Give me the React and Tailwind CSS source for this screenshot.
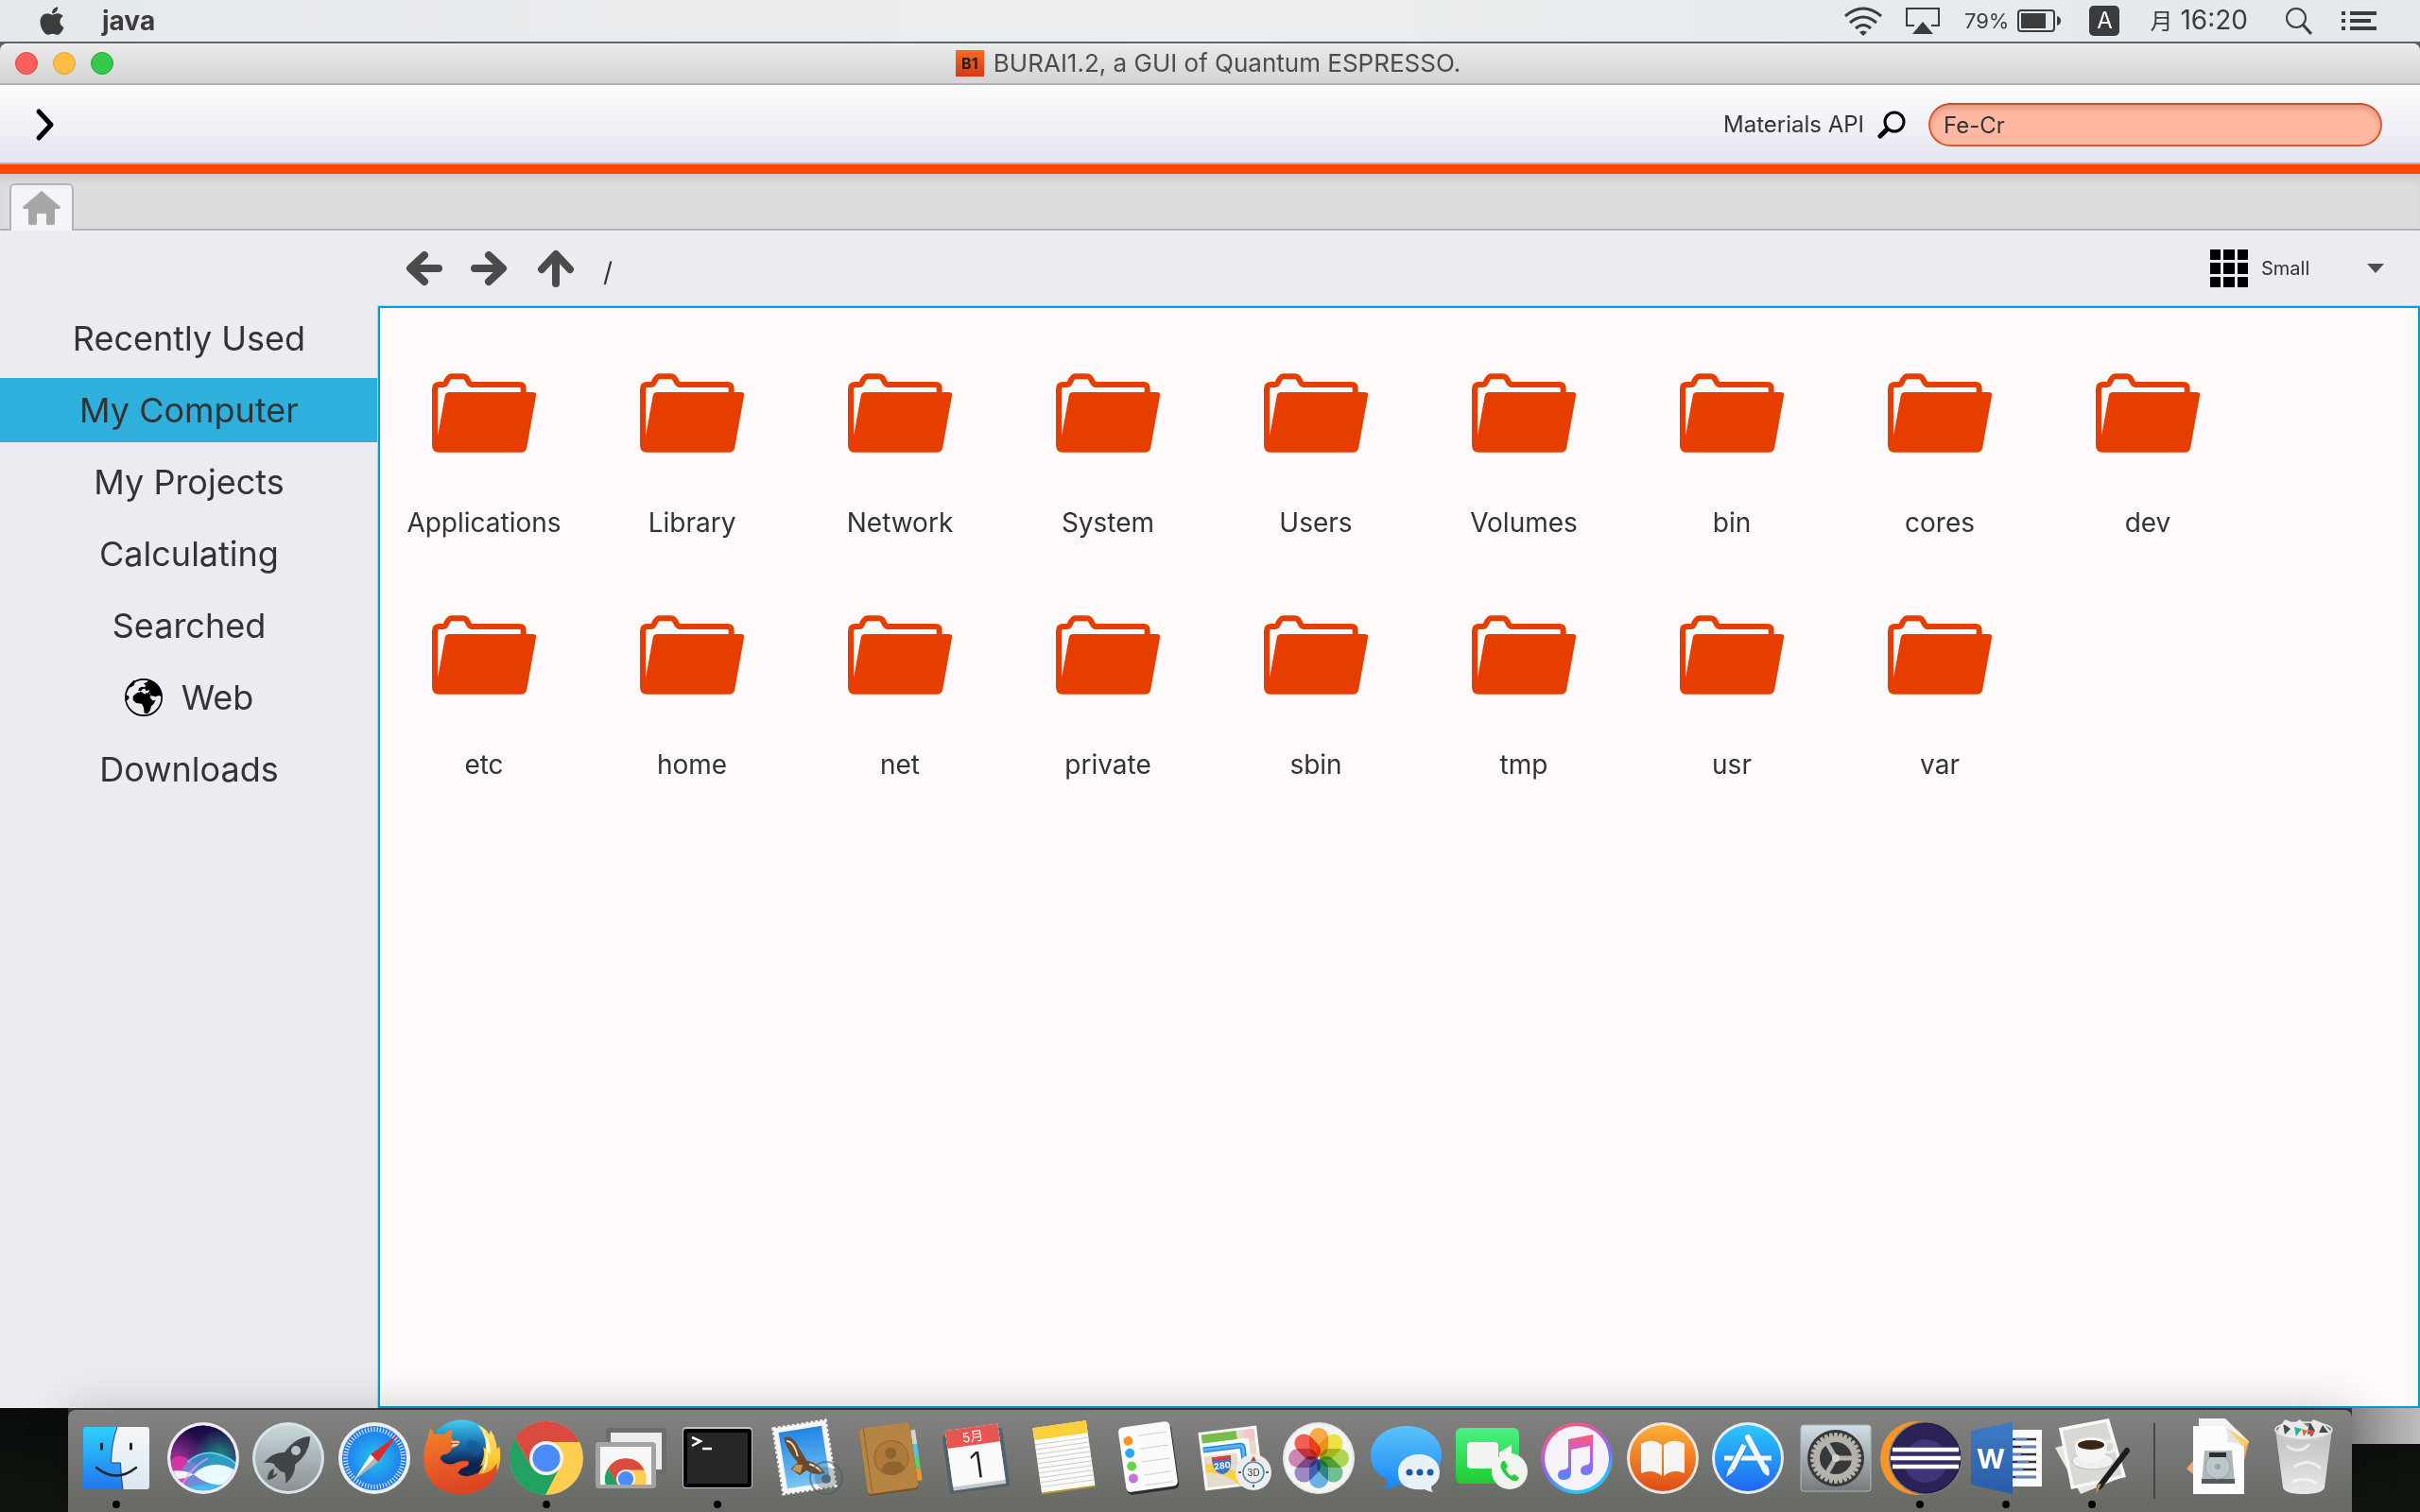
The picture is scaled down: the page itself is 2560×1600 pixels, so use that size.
import { FaApple } from "react-icons/fa";

const FOLDERS = [
  "Applications", "Library", "Network", "System", "Users", "Volumes", "bin", "cores", "dev",
  "etc", "home", "net", "private", "sbin", "tmp", "usr", "var",
];

const PLACES = ["Recently Used", "My Computer", "My Projects", "Calculating", "Searched", "Web", "Downloads"];

function FolderIcon() {
  return (
    <svg viewBox="108 45 330 252" className="h-[84px] w-[110px]" aria-hidden="true">
      <path
        d="M117 270V95Q117 81 131 81H143Q149 81 153 73Q161 55 169 55H207Q216 55 222 68Q228 81 235 81H386Q398 81 398 93V112"
        fill="none" stroke="#e63e00" strokeWidth="18"
      />
      <path
        d="M149 117Q151 105 162 105H430Q440 105 438 117L409 280Q406 296 392 296H130Q108 296 108 272V240H127Z"
        fill="#e63e00"
      />
    </svg>
  );
}

function GlobeIcon() {
  return (
    <svg viewBox="36 54 120 120" className="size-10" aria-hidden="true">
      <circle cx="96" cy="114" r="57.5" fill="none" stroke="#000" strokeWidth="5" />
      <path d="M40 100L50 84L66 76L68 64L84 60L64 60L44 82Z" />
      <path d="M39 108L48 108L50 116L44 124L39 120Z" />
      <path d="M96 70L106 66L112 58Q150 70 154 112L144 108L134 112L118 108L116 100L110 104L104 102L98 94L92 90L86 94L78 92L82 84L90 80L100 82L102 76Z" />
      <path d="M74 100L88 96L100 104L114 106L124 118L134 122L128 134L120 142L116 156L108 166L98 164L96 146L90 134L72 132L62 122L62 110Z" />
      <path d="M114 112L136 116L132 124L124 124Z" fill="#ecebf2" />
      <path d="M90 88L100 86L104 94L114 90L112 100L102 100Z" fill="#ecebf2" />
      <path d="M98 102L110 103L113 95L118 108L112 110Z" />
    </svg>
  );
}

function ArrowIcon({ d }) {
  return (
    <svg viewBox="0 0 40 40" className="size-10" aria-hidden="true">
      <path d={d} fill="none" stroke="#4b4b4b" strokeWidth="8" strokeLinecap="round" strokeLinejoin="round" />
    </svg>
  );
}

function MenuBar() {
  return (
    <header className="flex h-11 items-center bg-linear-to-r from-[#e6e9ec] via-[#eceeef] to-[#e3e8ec] pr-[46px] pl-[38px] text-[#3a3c3e]">
      <FaApple className="size-[34px]" />
      <span className="ml-9 text-[28px] leading-8 font-bold">java</span>
      <div className="ml-auto flex items-center">
        <svg viewBox="0 0 42 32" className="h-8 w-[42px]" fill="none" stroke="currentColor" strokeWidth="3">
          <path d="M2 11Q21 -5 40 11M7 18Q21 6 35 18M13 24Q21 17 29 24" />
          <path d="M17 28Q21 25 25 28L21 32Z" fill="currentColor" stroke="none" />
        </svg>
        <svg viewBox="0 0 36 28" className="ml-6 h-7 w-9" fill="none" stroke="currentColor" strokeWidth="2">
          <path d="M9 19H1V1H35V19H27" />
          <path d="M18 15L29 28H7Z" fill="currentColor" stroke="none" />
        </svg>
        <span className="ml-[26px] text-[22px] leading-8">79%</span>
        <svg viewBox="0 0 46 24" className="ml-[9px] h-6 w-[46px]">
          <rect x="1" y="1" width="38" height="22" rx="3" fill="none" stroke="currentColor" strokeWidth="2" />
          <rect x="4" y="4" width="26" height="16" fill="currentColor" />
          <path d="M42 7Q46 8 46 12T42 17Z" fill="currentColor" />
        </svg>
        <span className="ml-[30px] flex h-8 w-8 items-center justify-center rounded-[5px] bg-[#3a3c3e] text-[24px] leading-8 text-white">A</span>
        <span className="ml-8 text-[28px] leading-8">
          <span className="mr-2 text-[24px]">月</span>16:20
        </span>
        <svg viewBox="0 0 28 30" className="ml-10 h-[30px] w-7" fill="none" stroke="currentColor">
          <circle cx="11" cy="12" r="10" strokeWidth="2" />
          <path d="M18 19L27 29" strokeWidth="3" />
        </svg>
        <svg viewBox="0 0 37 20" className="ml-[31px] h-5 w-[37px]" stroke="currentColor" strokeWidth="4">
          <path d="M0 2H4M9 2H37M0 10H4M9 10H31M0 18H4M9 18H37" />
        </svg>
      </div>
    </header>
  );
}

function TitleBar() {
  return (
    <div className="flex h-11 items-center rounded-t-lg border-b-2 border-b-[#b0b0b0] bg-linear-to-b from-[#ebebeb] to-[#d3d3d3] pr-5 pl-4 shadow-[inset_0_1px_0_#f8f8f8]">
      <div className="flex flex-1 gap-4">
        <button aria-label="Close" className="size-6 rounded-full border border-[#e2453f] bg-[#fe5f5b]" />
        <button aria-label="Minimize" className="size-6 rounded-full border border-[#dfa032] bg-[#fdbe41]" />
        <button aria-label="Zoom" className="size-6 rounded-full border border-[#1fa836] bg-[#35c84a]" />
      </div>
      <span className="flex h-7 w-[30px] items-center justify-center bg-linear-to-b from-[#fb6a22] to-[#d43a14] text-[16px] leading-7 font-bold text-[#2b1a14]">B1</span>
      <h1 className="ml-[10px] text-[26px] leading-8 text-[#4c4c4c]">BURAI1.2, a GUI of Quantum ESPRESSO.</h1>
      <div className="flex-1" />
    </div>
  );
}

function ToolBar() {
  return (
    <div className="flex h-[94px] items-center border-b-[10px] border-[#ff4600] bg-linear-to-b from-[#fdfdfe] to-[#e4e4f0] pr-10 pl-9 shadow-[inset_0_-2px_0_#b2b2bb]">
      <button aria-label="Open menu">
        <svg viewBox="0 0 24 36" className="h-9 w-6">
          <path d="M5 4L18 18L5 32" fill="none" stroke="#000" strokeWidth="5" strokeLinecap="round" strokeLinejoin="round" />
        </svg>
      </button>
      <label htmlFor="materials" className="ml-auto text-[24px] leading-8 text-[#333]">Materials API</label>
      <svg viewBox="0 0 30 30" className="mr-6 ml-[14px] size-[30px]" fill="none" stroke="#000">
        <circle cx="18" cy="12" r="10" strokeWidth="3" />
        <path d="M10 20L3 27" strokeWidth="5" strokeLinecap="round" />
      </svg>
      <input
        id="materials"
        defaultValue="Fe-Cr"
        className="h-[46px] w-[480px] rounded-full border-2 border-[#d95a30] border-t-[#c4502c] bg-[#ffb9a2] px-[14px] text-[24px] text-[#333] shadow-[inset_0_4px_6px_rgba(150,60,30,0.25)] outline-none"
      />
    </div>
  );
}

function TabBar() {
  return (
    <div className="flex h-[60px] items-end bg-[#dcdcde] px-[10px] shadow-[inset_0_-2px_0_#b3b3ba,inset_0_8px_8px_-4px_#c6c6c9]">
      <button aria-label="Home" className="flex h-[50px] w-[68px] items-center justify-center rounded-t-[6px] border-2 border-b-0 border-[#b3b3ba] bg-[#f3f3f8]">
        <svg viewBox="0 0 40 36" className="h-9 w-10" fill="#a6a6a6">
          <path d="M20 0L40 17Q40 19 38 19H34V34Q34 36 32 36H27Q25 36 25 34V25Q25 24 24 24H16Q15 24 15 25V34Q15 36 13 36H8Q6 36 6 34V19H2Q0 19 0 17Z" />
        </svg>
      </button>
    </div>
  );
}

function Sidebar() {
  return (
    <nav className="flex w-[400px] shrink-0 flex-col gap-2 pt-20">
      {PLACES.map((name) => (
        <button
          key={name}
          className={
            name === "My Computer"
              ? "flex h-[68px] items-center justify-center gap-5 bg-[#2eafdc] text-[36px] leading-[44px]"
              : "flex h-[68px] items-center justify-center gap-5 text-[36px] leading-[44px]"
          }
        >
          {name === "Web" && <GlobeIcon />}
          {name}
        </button>
      ))}
    </nav>
  );
}

function Explorer() {
  return (
    <main className="flex min-w-0 flex-1 flex-col">
      <div className="flex h-20 items-center pr-[38px] pl-7">
        <div className="flex items-center gap-[30px]">
          <button aria-label="Back"><ArrowIcon d="M21 6L6 20L21 34M7 20H36" /></button>
          <button aria-label="Forward"><ArrowIcon d="M19 6L34 20L19 34M33 20H4" /></button>
          <button aria-label="Up"><ArrowIcon d="M5 21L20 5L35 21M20 6V36" /></button>
          <span className="pt-2 text-[28px] leading-9">/</span>
        </div>
        <svg viewBox="0 0 40 40" className="mr-[10px] ml-auto size-10">
          <path d="M0 0H11V11H0ZM14 0H26V11H14ZM29 0H40V11H29ZM0 14H11V26H0ZM14 14H26V26H14ZM29 14H40V26H29ZM0 29H11V40H0ZM14 29H26V40H14ZM29 29H40V40H29Z" />
        </svg>
        <div className="relative flex w-[134px] items-center">
          <select aria-label="Icon size" className="w-full appearance-none bg-transparent pl-1 text-[20px] leading-8 outline-none">
            <option>Small</option>
          </select>
          <svg viewBox="0 0 18 10" className="pointer-events-none absolute right-0 h-[10px] w-[18px]">
            <path d="M0 0H18L9 10Z" fill="#4f4f52" />
          </svg>
        </div>
      </div>
      <ul className="flex flex-1 flex-wrap content-start border-2 border-[#009dd9] bg-[#fffafa] pt-4 shadow-[0_0_0_1px_#a9d6e8]">
        {FOLDERS.map((name) => (
          <li key={name} className="h-64 w-[220px]">
            <button className="flex w-full flex-col items-center pt-[53px]">
              <FolderIcon />
              <span className="mt-14 text-[28px] leading-9">{name}</span>
            </button>
          </li>
        ))}
      </ul>
    </main>
  );
}

function Grad({ id, stops, x2 = 0, y2 = 1 }) {
  return (
    <linearGradient id={id} x1="0" y1="0" x2={x2} y2={y2}>
      {stops.map((c, i) => (
        <stop key={i} offset={i / (stops.length - 1)} stopColor={c} />
      ))}
    </linearGradient>
  );
}

function ChromeLogo() {
  return (
    <g>
      <circle r="39" fill="#ffcd50" />
      <path d="M-33 -21A39 39 0 0 0 -1 39L14 10L0 0L-16 9Z" fill="#21a262" />
      <path d="M35 -17H0L-16 9L-33 -21A39 39 0 0 1 35 -17Z" fill="#db4a40" />
      <circle r="18" fill="#f4f4f4" />
      <circle r="14.500" fill="#4c8bf5" />
    </g>
  );
}

const TICKS = Array.from({ length: 60 }, (_, i) => i * 6);
const TEETH = Array.from({ length: 30 }, (_, i) => i * 12);
const LINES = [0, 1, 2, 3, 4, 5, 6, 7, 8, 9];
const PETALS = ["#f9a13a", "#eadf35", "#a8cf49", "#64b98a", "#5fa9de", "#8f80c0", "#c97bab", "#ee5148"];

const APPS = [
  {
    name: "Finder", running: true,
    art: (
      <>
        <Grad id="finder" stops={["#2fd0fb", "#2276f0"]} />
        <Grad id="finder2" stops={["#f6f6f6", "#dbe7f4"]} />
        <rect x="-35" y="18" width="70" height="66" rx="3" fill="url(#finder)" />
        <path d="M1 18H32Q35 18 35 21V81Q35 84 32 84H7Q5 70 4.500 56H-5.500Q-5 34 1 18Z" fill="url(#finder2)" />
        <path d="M1 18Q-5 34 -5.500 56H4.500Q5 70 7 84" fill="none" stroke="#1d4470" strokeWidth="1" />
        <path d="M-15.500 36V41M15.500 36V41" stroke="#1a2530" strokeWidth="3" strokeLinecap="round" />
        <path d="M-21 61Q0 78 21 61" fill="none" stroke="#1a2530" strokeWidth="2.500" strokeLinecap="round" />
      </>
    ),
  },
  {
    name: "Siri",
    art: (
      <g transform="translate(-44 -2) scale(0.3333)">
        <Grad id="siri" stops={["#170a40", "#24104f", "#2a2a6a", "#3f86cf", "#6fd0ee"]} />
        <radialGradient id="siriG" cx="0.75" cy="0.45" r="0.4"><stop stopColor="#1fa088" stopOpacity="0.8" /><stop offset="1" stopColor="#1fa088" stopOpacity="0" /></radialGradient>
        <radialGradient id="siriP" cx="0.1" cy="0.5" r="0.45"><stop stopColor="#b3309c" stopOpacity="0.8" /><stop offset="1" stopColor="#b3309c" stopOpacity="0" /></radialGradient>
        <clipPath id="siriC"><circle cx="135" cy="159" r="104" /></clipPath>
        <circle cx="135" cy="159" r="114" fill="#efeaf6" />
        <g clipPath="url(#siriC)">
          <circle cx="135" cy="159" r="105" fill="url(#siri)" />
          <circle cx="135" cy="159" r="105" fill="url(#siriG)" />
          <circle cx="135" cy="159" r="105" fill="url(#siriP)" />
          <path d="M28 170Q50 140 84 160T150 240L90 250L28 210Z" fill="#ee35a8" opacity="0.75" />
          <path d="M70 190Q120 130 172 144T242 180V262H90Z" fill="#35b5ee" opacity="0.6" />
          <path d="M84 172Q130 132 180 146T242 184" fill="none" stroke="#6fe0ff" strokeWidth="5" opacity="0.8" />
          <path d="M24 204Q64 190 104 211Q140 176 186 180Q220 184 246 204Q210 244 180 244Q140 240 104 211Q70 232 24 222Z" fill="#f2ffff" opacity="0.95" />
          <path d="M60 262Q90 190 150 160" fill="none" stroke="#f7a7ff" strokeWidth="7" opacity="0.6" />
        </g>
      </g>
    ),
  },
  {
    name: "Launchpad",
    art: (
      <>
        <Grad id="launch" stops={["#c9d8dc", "#8c9094"]} />
        <circle cy="51" r="38" fill="#d6e4e8" />
        <circle cy="51" r="35" fill="url(#launch)" />
        <path d="M23 28Q7 29 -4 45Q-16 44 -26 56Q-20 55 -15 57Q-14 61 -11 62Q-9 66 -4 66Q-2 72 -3 78Q8 68 7 58Q23 46 23 28Z" fill="#414449" />
        <circle cx="8" cy="43" r="5" fill="#b5c2c6" />
        <path d="M-15 62Q-22 64 -22 74Q-14 73 -11 67Q-15 68 -16 70Z" fill="#414449" />
      </>
    ),
  },
  {
    name: "Safari",
    art: (
      <>
        <radialGradient id="safari"><stop stopColor="#25c3ee" /><stop offset="1" stopColor="#1f76ee" /></radialGradient>
        <circle cy="51" r="38" fill="#eef0f2" />
        <g transform="translate(0 51)">
          <circle r="34" fill="url(#safari)" />
          {TICKS.map((a) => <path key={a} d="M0 -33V-28" stroke="#fff" strokeWidth="1" transform={`rotate(${a})`} />)}
          <path d="M24 -24L-4 -4L4 4Z" fill="#e02a2c" />
          <path d="M-22 24L-4 -4L0 0Z" fill="#fff" />
          <path d="M-22 24L0 0L4 4Z" fill="#b4b4b4" />
        </g>
      </>
    ),
  },
  {
    name: "Firefox",
    art: (
      <g transform="translate(-316 -2) scale(0.3333)">
        <Grad id="ffBlue" stops={["#45cdf0", "#1a78b8", "#10234c", "#10234c"]} />
        <Grad id="ffFox" stops={["#f08a24", "#ea6128", "#dc4424"]} x2="0.3" />
        <Grad id="ffTail" stops={["#ffe680", "#fdc92e", "#f07a22"]} />
        <circle cx="952" cy="142" r="105" fill="url(#ffBlue)" />
        <path d="M975 100Q1000 104 1012 120L1008 150Q990 160 984 140L966 128Z" fill="#165a94" opacity="0.7" />
        <path d="M1004 54Q1026 62 1040 84L1044 70Q1062 96 1064 130L1072 122Q1082 176 1058 214Q1030 262 970 268L960 232Q1006 220 1020 180L1010 186Q1030 150 1020 124L1028 130Q1032 90 1004 54Z" fill="url(#ffTail)" />
        <path d="M1016 70Q1044 100 1044 146L1034 140Q1040 180 1018 206Q1034 150 1030 120Q1034 96 1016 70Z" fill="#fffbe0" />
        <path d="M1066 176Q1060 196 1048 212Q1044 196 1066 176Z" fill="#7a2414" />
        <path d="M854 62Q860 80 868 84Q884 80 898 84Q908 70 924 68Q916 88 924 102H942Q950 110 936 122L920 130Q918 142 904 146Q888 146 884 160Q896 182 924 178Q948 164 972 168Q980 178 968 186Q950 188 940 206Q964 226 1000 208Q1036 214 1060 184Q1072 196 1052 226Q1022 274 950 274Q880 274 846 220Q822 172 838 112Q846 100 846 86Q848 70 854 62Z" fill="url(#ffFox)" />
        <path d="M918 106H944Q950 114 936 120L920 124Q928 116 918 106Z" fill="#f9d8c4" />
        <path d="M918 112H944" stroke="#b02a1c" strokeWidth="3" />
        <path d="M884 160Q894 184 926 180Q950 166 972 170" fill="none" stroke="#c23c1c" strokeWidth="3" opacity="0.6" />
      </g>
    ),
  },
  { name: "Chrome", running: true, art: <g transform="translate(0 51)"><ChromeLogo /></g> },
  {
    name: "Remote Desktop",
    art: (
      <>
        <clipPath id="rdClip"><rect x="-33" y="40" width="50" height="39" /></clipPath>
        <rect x="-27" y="19" width="64" height="49" rx="4" fill="#6d6d6d" />
        <rect x="-22" y="24" width="54" height="39" fill="#ededed" />
        <rect x="-38" y="34" width="64" height="49" rx="4" fill="#a3a3a3" />
        <rect x="-33" y="39" width="54" height="40" fill="#f6f6f6" />
        <g clipPath="url(#rdClip)"><g transform="translate(-6 73) scale(0.56)"><ChromeLogo /></g></g>
      </>
    ),
  },
  {
    name: "Terminal", running: true,
    art: (
      <>
        <rect x="-37" y="18" width="74" height="65" rx="4" fill="#b6c6cc" />
        <rect x="-36" y="20" width="72" height="62" rx="3" fill="#000" />
        <rect x="-32" y="24" width="64" height="54" fill="#262626" />
        <path d="M-27 29L-18 33L-27 38M-16 41H-6" fill="none" stroke="#fff" strokeWidth="2.500" />
      </>
    ),
  },
  {
    name: "Mail",
    art: (
      <>
        <Grad id="mail" stops={["#2385e2", "#7ac6f5"]} />
        <g transform="translate(1 50) rotate(-9)">
          <rect x="-28" y="-35" width="56" height="70" fill="#f7f7f7" stroke="#f7f7f7" strokeWidth="3" strokeDasharray="3 2" />
          <rect x="-23" y="-30" width="46" height="60" fill="url(#mail)" />
          <path d="M-18 -24Q-8 -26 -4 -10L2 4Q14 8 19 20Q8 22 0 14L-8 18L-16 10L-8 4Q-18 -10 -18 -24Z" fill="#6b4a2c" />
          <path d="M-16 -20Q-8 -18 -7 -2M4 8Q12 12 15 18" stroke="#e9dcc8" strokeWidth="2" fill="none" />
          <path d="M-10 6L-3 8L-7 16L-15 11Z" fill="#c69256" />
        </g>
        <circle cx="24" cy="72" r="17" fill="none" stroke="#4d5a68" strokeWidth="2" opacity="0.6" />
        <circle cx="24" cy="72" r="12" fill="#51606e" opacity="0.35" />
        <circle cx="24" cy="73" r="5" fill="#45525f" opacity="0.7" />
      </>
    ),
  },
  {
    name: "Contacts",
    art: (
      <g transform="translate(-1 51) rotate(-8)">
        <rect x="22" y="-26" width="10" height="15" fill="#d3d3d3" />
        <rect x="22" y="-11" width="10" height="13" fill="#5cc0e4" />
        <rect x="22" y="2" width="10" height="13" fill="#5bd06f" />
        <rect x="22" y="15" width="10" height="13" fill="#e9992a" />
        <rect x="-27" y="-33" width="54" height="70" rx="4" fill="#7c5222" />
        <rect x="-27" y="-35" width="54" height="70" rx="4" fill="#b78543" />
        <path d="M-22 -35V35" stroke="#8f6430" strokeWidth="1" />
        <circle cx="3" cy="0" r="18" fill="#ae7b3a" stroke="#8f6430" strokeWidth="1" />
        <circle cx="3" cy="-5" r="6" fill="#8f6430" />
        <path d="M-9 12Q-7 4 3 4T15 12Q10 18 3 18T-9 12Z" fill="#8f6430" />
      </g>
    ),
  },
  {
    name: "Calendar",
    art: (
      <g transform="translate(0 50) rotate(-8)">
        <rect x="-32" y="-27" width="64" height="62" rx="2" fill="#52626d" />
        <rect x="-28" y="-30" width="56" height="62" fill="#c9c9c9" />
        <rect x="-28" y="-32" width="56" height="60" fill="#fafafa" />
        <rect x="-28" y="-32" width="56" height="19" fill="#e85450" />
        <text y="-17" textAnchor="middle" fontSize="14" fill="#fff">5月</text>
        <text y="22" textAnchor="middle" fontSize="38" fontWeight="300" fill="#222">1</text>
      </g>
    ),
  },
  {
    name: "Notes",
    art: (
      <g transform="translate(2 50) rotate(-8)">
        <rect x="-28" y="-35" width="57" height="71" fill="#b8922c" />
        <rect x="-28" y="-35" width="57" height="69" fill="#fbfbf9" />
        <rect x="-28" y="-35" width="57" height="13" fill="#fccf3c" />
        {LINES.map((i) => <path key={i} d={`M-28 ${-17 + i * 5}H29`} stroke="#c9c9c9" strokeWidth="1" />)}
      </g>
    ),
  },
  {
    name: "Reminders",
    art: (
      <g transform="translate(1 50) rotate(-8)">
        <rect x="-27" y="-32" width="55" height="69" rx="5" fill="#2d2d2d" />
        <rect x="-28" y="-35" width="55" height="69" rx="5" fill="#fafafa" />
        <path d="M-8 -24H22M-8 -10H22M-8 4H22M-8 18H22M-8 29H22" stroke="#cfcfcf" strokeWidth="1" />
        <circle cx="-19" cy="-20" r="5" fill="#fd9526" />
        <circle cx="-19" cy="-7" r="5" fill="#2aa8f5" />
        <circle cx="-19" cy="7" r="5" fill="#62d643" />
        <circle cx="-19" cy="20" r="5" fill="#c673e0" />
      </g>
    ),
  },
  {
    name: "Maps",
    art: (
      <>
        <g transform="translate(-2 51) rotate(-7)">
          <rect x="-31" y="-31" width="62" height="62" fill="#f8f8f6" />
          <rect x="-28" y="-28" width="56" height="56" fill="#e4dccb" />
          <path d="M-28 -28H9V-18H-28Z" fill="#78bd49" />
          <rect x="17" y="-28" width="11" height="12" fill="#f3c4ce" />
          <path d="M-28 -12H14V28" fill="none" stroke="#fff" strokeWidth="14" />
          <path d="M-28 -12H11Q14 -12 14 -9V28" fill="none" stroke="#2b88dd" strokeWidth="6" />
          <path d="M-28 -12H11Q14 -12 14 -9V28" fill="none" stroke="#55b5f2" strokeWidth="3" />
          <path d="M-28 8Q-6 8 10 28" fill="none" stroke="#fcd23f" strokeWidth="9" />
          <path d="M-20 -3H0Q1 14 -10 16Q-21 14 -20 -3Z" fill="#3477d6" />
          <path d="M-20 -3H0V1H-20Z" fill="#d8403c" />
          <text x="-10" y="10" textAnchor="middle" fontSize="9" fontWeight="700" fill="#fff">280</text>
        </g>
        <circle cx="22" cy="66" r="19" fill="#ededee" />
        <circle cx="22" cy="66" r="11" fill="none" stroke="#4b86a8" strokeWidth="1.500" />
        <path d="M22 49L25 54H19Z" fill="#e23030" />
        <path d="M6 66H9M35 66H38M22 79V82" stroke="#333" strokeWidth="1.500" />
        <text x="22" y="70" textAnchor="middle" fontSize="10" fill="#333">3D</text>
      </>
    ),
  },
  {
    name: "Photos",
    art: (
      <>
        <circle cy="51" r="38" fill="#e9e9e8" />
        <circle cy="51" r="36" fill="#f4f4f3" />
        <g transform="translate(0 51)" className="isolate">
          {PETALS.map((c, i) => (
            <rect key={c} x="-10" y="-32" width="20" height="31" rx="10" fill={c} className="mix-blend-multiply" opacity="0.92" transform={`rotate(${i * 45})`} />
          ))}
        </g>
      </>
    ),
  },
  {
    name: "Messages",
    art: (
      <>
        <Grad id="msg" stops={["#5cc4fa", "#1a86f8"]} />
        <path d="M2 17C24 17 39 30 39 48S24 80 2 80Q-4 80 -8 79Q-14 84 -23 83Q-17 79 -18 74Q-36 66 -36 48C-36 30 -20 17 2 17Z" fill="url(#msg)" />
        <path d="M15 47C28 47 37 55 37 66Q37 76 28 81Q28 85 30 87Q24 86 21 84Q-7 86 -7 66C-7 55 2 47 15 47Z" fill="#e9f1f8" />
        <circle cx="5" cy="66" r="3.500" fill="#1a5aa8" /><circle cx="16" cy="66" r="3.500" fill="#1a5aa8" /><circle cx="27" cy="66" r="3.500" fill="#1a5aa8" />
      </>
    ),
  },
  {
    name: "FaceTime",
    art: (
      <>
        <Grad id="face" stops={["#4bf182", "#1fcb32"]} />
        <rect x="-37" y="19" width="67" height="59" rx="6" fill="url(#face)" />
        <rect x="-25" y="34" width="33" height="28" rx="4" fill="#f2f2f0" />
        <path d="M9 45L22 37V52H9Z" fill="#f2f2f0" />
        <circle cx="20" cy="65" r="19" fill="#f0f3ee" />
        <path d="M13 54Q9 57 11 62Q15 71 24 75Q28 76 30 72L25 68L22 70Q17 67 16 62L18 60L15 54Z" fill="#27cb3c" />
      </>
    ),
  },
  {
    name: "iTunes",
    art: (
      <>
        <Grad id="itRing" stops={["#fb5c57", "#d85ab5", "#7a6df5", "#28c5fa"]} x2="0.4" />
        <Grad id="itNote" stops={["#fb5b75", "#b75cf0", "#4f86fb"]} />
        <circle cy="51" r="38" fill="url(#itRing)" />
        <circle cy="51" r="34" fill="#f6f3f8" />
        <path d="M-9 31L17 26V62Q17 69 10 69Q4 69 4 64Q4 59 11 58Q14 57 14 54V38L-6 42V67Q-6 74 -14 74Q-20 74 -20 69Q-20 63 -13 63Q-9 62 -9 59Z" fill="url(#itNote)" />
      </>
    ),
  },
  {
    name: "iBooks",
    art: (
      <>
        <Grad id="books" stops={["#fdb034", "#df4b18"]} />
        <circle cy="51" r="38" fill="#ebe6e2" />
        <circle cy="51" r="35" fill="url(#books)" />
        <path d="M-1 37Q-11 29 -23 36V67Q-10 62 -1 70ZM1 37Q11 29 23 36V67Q10 62 1 70Z" fill="#f6f4f1" />
      </>
    ),
  },
  {
    name: "App Store",
    art: (
      <>
        <Grad id="store" stops={["#2bc8fa", "#1f67f0"]} />
        <circle cy="51" r="38" fill="#e8ecf2" />
        <circle cy="51" r="35" fill="url(#store)" />
        <path d="M-25 51H25" stroke="#f4f6f8" strokeWidth="5" />
        <path d="M0 29L17 61" stroke="#f4f6f8" strokeWidth="6" strokeLinecap="round" />
        <path d="M14 62L20 58Q24 64 22 70Q16 68 14 62Z" fill="#f4f6f8" />
        <path d="M-4 37L-17 63" stroke="#1c82ee" strokeWidth="8" />
        <path d="M-4 37L-17 63" stroke="#f4f6f8" strokeWidth="6" />
        <path d="M-20 61L-15 65L-23 71Z" fill="#f4f6f8" />
      </>
    ),
  },
  {
    name: "System Preferences",
    art: (
      <>
        <Grad id="prefs" stops={["#cfe0e6", "#77797b"]} />
        <rect x="-35" y="16" width="74" height="70" rx="3" fill="url(#prefs)" stroke="#a9b8be" strokeWidth="1" />
        <g transform="translate(2 51)">
          <circle r="30" fill="#37383a" />
          {TEETH.map((a) => <path key={a} d="M-1.500 -27H1.500L2.500 -22H-2.500Z" fill="#b5b1ab" transform={`rotate(${a})`} />)}
          <circle r="20" fill="none" stroke="#b5b1ab" strokeWidth="6" />
          <path d="M0 0H18M0 0L-10 -17M0 0L-10 17" stroke="#b5b1ab" strokeWidth="5" />
          <circle r="4" fill="#d5d3cf" />
        </g>
      </>
    ),
  },
  {
    name: "Eclipse", running: true,
    art: (
      <>
        <circle cx="-3" cy="51" r="39" fill="#f7942a" />
        <circle cx="6" cy="51" r="39" fill="#7a7b78" />
        <circle cx="6" cy="51" r="37" fill="#2c2255" stroke="#1b1536" strokeWidth="1" />
        <circle cx="6" cy="54" r="23" fill="#41347b" />
        <path d="M-30 39H42V62H-30Z" fill="#372c66" />
        <path d="M-29 42H41M-31 51H43M-29 60H41" stroke="#fff" strokeWidth="4.500" />
      </>
    ),
  },
  {
    name: "Word", running: true,
    art: (
      <>
        <Grad id="word" stops={["#3f7ac6", "#2a5ca8"]} />
        <rect x="0" y="21" width="38" height="60" fill="#fbfbfb" />
        <path d="M6 31H32M6 39H32M6 47H32M6 55H32M6 63H32M6 71H32" stroke="#333" strokeWidth="2.500" />
        <path d="M10 31H22M16 39H32M6 47H16M12 55H24M6 63H18M10 71H32" stroke="#5585c5" strokeWidth="2.500" />
        <path d="M-37 22L7 13V89L-37 79Z" fill="url(#word)" />
        <text x="-16" y="62" textAnchor="middle" fontSize="29" fontWeight="700" fill="#fff">W</text>
      </>
    ),
  },
  {
    name: "Jar Launcher", running: true,
    art: (
      <>
        <path d="M-39 40L10 26L30 72L-12 89Z" fill="#e6e6e4" />
        <path d="M-35 19L18 9L36 71L-22 84Z" fill="#f7f7f7" />
        <path d="M-31 22L15 13L32 69L-19 80Z" fill="#d9d8d5" />
        <ellipse cx="1" cy="54" rx="22" ry="9" fill="#efefed" stroke="#bdbdbb" strokeWidth="1" />
        <circle cx="18" cy="39" r="6" fill="none" stroke="#efefed" strokeWidth="3" />
        <path d="M-18 36H16Q16 56 -1 56T-18 36Z" fill="#f4f4f2" />
        <ellipse cx="-1" cy="36" rx="17" ry="7" fill="#f4f4f2" />
        <ellipse cx="-1" cy="37" rx="14" ry="5" fill="#3c2415" />
        <path d="M37 43L8 81" stroke="#1c1c1c" strokeWidth="6" strokeLinecap="round" />
        <path d="M10 78L4 89L6 79Z" fill="#c9a24a" />
      </>
    ),
  },
];

const FILES = [
  {
    name: "Documents",
    art: (
      <>
        <path d="M-33 62L-26 54V68ZM20 20L33 33L26 62Z" fill="#f0a878" />
        <path d="M-20 9H8L33 34L24 42H-20Z" fill="#f3f3f3" />
        <path d="M8 18L33 34L24 44Z" fill="#f8cf62" />
        <path d="M-26 17H8L28 40V89H-26Z" fill="#fcfcfc" />
        <path d="M8 17Q12 30 10 34Q20 33 28 40Z" fill="#e3e3e3" />
        <path d="M-14 43H15L18 78H-17Z" fill="#aeb9be" />
        <rect x="-17" y="73" width="35" height="5" fill="#56585a" />
        <circle cy="60" r="13" fill="#bcc7cb" stroke="#98a4a9" strokeWidth="1" />
        <circle cy="60" r="3" fill="#98a4a9" />
        <rect x="-9" y="45" width="18" height="5" fill="#2d2d2f" />
      </>
    ),
  },
  {
    name: "Trash",
    art: (
      <>
        <Grad id="trash" stops={["#c6c6c6", "#dadada", "#f2f2f2"]} />
        <path d="M-28 22L-20 10L-10 14L-4 10L4 18L10 10L20 14L28 22L20 32H-20Z" fill="#e8e8e8" />
        <path d="M-22 14L-14 20L-20 26ZM6 12L12 22L4 26ZM20 16L26 24L16 24Z" fill="#47484a" />
        <path d="M-10 18L-2 20L-8 28Z" fill="#2bb3a4" /><path d="M4 20L12 22L8 30Z" fill="#c8503e" /><path d="M-2 20L4 22L0 28Z" fill="#e06a2e" />
        <path d="M-30 20L-22 82Q-20 89 0 89T22 82L30 20Q20 31 0 31T-30 20Z" fill="url(#trash)" opacity="0.93" />
        <ellipse cy="21" rx="30" ry="8" fill="none" stroke="#ececec" strokeWidth="1.500" />
        <path d="M-18 38Q-4 48 6 36M-10 60Q6 50 18 62M-12 76Q2 70 14 78" fill="none" stroke="#fff" strokeWidth="3" opacity="0.6" />
      </>
    ),
  },
];

function DockItem({ item }) {
  return (
    <li className="flex flex-1 justify-center">
      <button aria-label={item.name}>
        <svg viewBox="-45 0 90 108" className="h-[108px] w-[90px]">
          {item.art}
          {item.running && <circle cy="100" r="4" fill="#000" />}
        </svg>
      </button>
    </li>
  );
}

function Dock() {
  return (
    <footer className="flex bg-linear-to-b from-[#0a0d0b] to-[#10160f]">
      <div className="w-[72px] shrink-0" />
      <div className="relative min-w-0 flex-1 bg-[#3a3b39] pt-[2px]">
        <ul className="flex rounded-t-lg bg-linear-to-b from-[#828281] to-[#666964] px-[6px] shadow-[0_0_50px_rgba(0,0,0,0.2)]">
          {APPS.map((a) => <DockItem key={a.name} item={a} />)}
          <li aria-hidden="true" className="flex w-[42px] shrink-0 justify-center py-[14px]">
            <span className="h-20 w-[2px] bg-[#474846]" />
          </li>
          {FILES.map((a) => <DockItem key={a.name} item={a} />)}
        </ul>
      </div>
      <div className="w-[72px] shrink-0">
        <div className="h-[38px] bg-linear-to-r from-[#8b8b8b] to-[#bdbdbd]" />
      </div>
    </footer>
  );
}

export default function App() {
  return (
    <div className="flex min-h-screen flex-col bg-[#5a626c] font-['Inter','Noto_Sans_CJK_JP',sans-serif] text-[#333]">
      <MenuBar />
      <div className="flex flex-1 flex-col pt-[2px]">
        <TitleBar />
        <ToolBar />
        <TabBar />
        <div className="flex flex-1 bg-[#ecebf2]">
          <Sidebar />
          <Explorer />
        </div>
      </div>
      <Dock />
    </div>
  );
}
